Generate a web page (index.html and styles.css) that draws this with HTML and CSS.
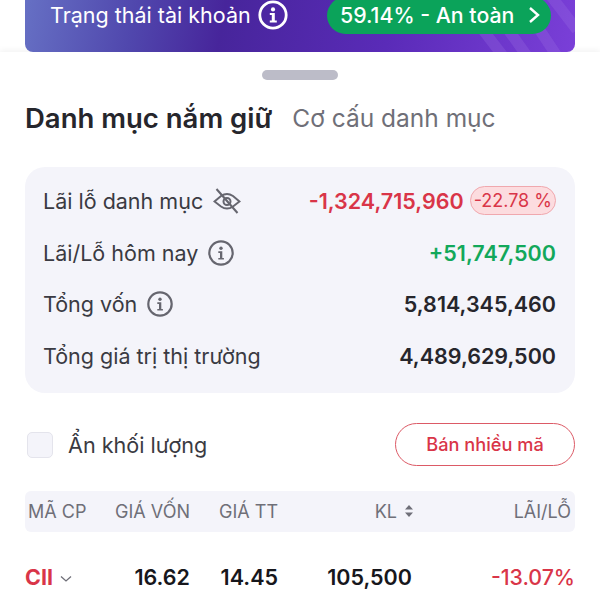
FILE: index.html
```html
<!DOCTYPE html>
<html lang="vi">
<head>
  <meta charset="UTF-8">
  <meta name="viewport" content="width=device-width, initial-scale=1.0">
  <title>Danh mục nắm giữ</title>
  <link rel="stylesheet" href="styles.css">
</head>
<body>
  <div class="screen">
    <div class="banner">
      <svg class="banner-stripes" width="110" height="52" viewBox="0 0 110 52" fill="none">
        <path d="M38 56 L18 30 M62 56 L32 14 M92 56 L52 -4 M112 30 L86 -4" stroke="#a27be8" stroke-opacity="0.24" stroke-width="11"/>
      </svg>
      <div class="banner-label">
        <span>Trạng thái tài khoản</span>
        <svg width="30" height="30" viewBox="0 0 30 30" fill="none">
          <circle cx="15" cy="15" r="13.200" stroke="#fff" stroke-width="2.800"/>
          <circle cx="15" cy="9.400" r="2.100" fill="#fff"/>
          <path d="M11.800 13h5v7.400h2v2h-7v-2h2v-5.400h-2z" fill="#fff"/>
        </svg>
      </div>
      <div class="status-pill">
        <span>59.14% - An toàn</span>
        <svg width="14" height="18" viewBox="0 0 14 18" fill="none">
          <path d="M3 2l8 7-8 7" stroke="#fff" stroke-width="2.400"/>
        </svg>
      </div>
    </div>

    <div class="sheet">
      <div class="grabber"></div>

      <div class="tabs">
        <span class="tab active">Danh mục nắm giữ</span>
        <span class="tab">Cơ cấu danh mục</span>
      </div>

      <div class="summary">
        <div class="summary-row">
          <div class="summary-label">
            <span>Lãi lỗ danh mục</span>
            <svg width="28" height="28" viewBox="0 0 28 28" fill="none">
              <path d="M1.500 14.500L8 9q3-2 6-2t6 2l6.500 5.500L20 19.500q-3 2-6 2t-6-2z" stroke="#66666f" stroke-width="2"/>
              <circle cx="14" cy="14.500" r="3.500" stroke="#66666f" stroke-width="2"/>
              <path d="M3.500 2l21 24" stroke="#66666f" stroke-width="2"/>
            </svg>
          </div>
          <div class="summary-value loss">
            <span>-1,324,715,960</span>
            <span class="percent-badge">-22.78 %</span>
          </div>
        </div>
        <div class="summary-row">
          <div class="summary-label">
            <span>Lãi/Lỗ hôm nay</span>
            <svg width="26" height="26" viewBox="0 0 26 26" fill="none">
              <circle cx="13" cy="13" r="11.700" stroke="#66666f" stroke-width="2.200"/>
              <circle cx="13" cy="8.200" r="1.700" fill="#66666f"/>
              <path d="M10.300 11.200h4v6.700h1.600v1.700h-5.600v-1.700h1.700v-5h-1.700z" fill="#66666f"/>
            </svg>
          </div>
          <div class="summary-value gain">+51,747,500</div>
        </div>
        <div class="summary-row">
          <div class="summary-label">
            <span>Tổng vốn</span>
            <svg width="26" height="26" viewBox="0 0 26 26" fill="none">
              <circle cx="13" cy="13" r="11.700" stroke="#66666f" stroke-width="2.200"/>
              <circle cx="13" cy="8.200" r="1.700" fill="#66666f"/>
              <path d="M10.300 11.200h4v6.700h1.600v1.700h-5.600v-1.700h1.700v-5h-1.700z" fill="#66666f"/>
            </svg>
          </div>
          <div class="summary-value">5,814,345,460</div>
        </div>
        <div class="summary-row">
          <div class="summary-label">
            <span>Tổng giá trị thị trường</span>
          </div>
          <div class="summary-value">4,489,629,500</div>
        </div>
      </div>

      <div class="actions">
        <label class="hide-volume">
          <span class="checkbox"></span>
          <span>Ẩn khối lượng</span>
        </label>
        <div class="sell-button">Bán nhiều mã</div>
      </div>

      <div class="table-head">
        <span class="col-code">MÃ CP</span>
        <span class="col-cost">GIÁ VỐN</span>
        <span class="col-price">GIÁ TT</span>
        <span class="col-volume">KL
          <svg width="10" height="14" viewBox="0 0 10 14"><path d="M5 1l4 4.600H1zM5 13L1 8.400h8z" fill="#6f6f78"/></svg>
        </span>
        <span class="col-change">LÃI/LỖ</span>
      </div>

      <div class="table-row">
        <span class="col-code stock-code">CII
          <svg width="12" height="8" viewBox="0 0 12 8" fill="none"><path d="M1 1.500l5 4.500 5-4.500" stroke="#6f6f78" stroke-width="1.300"/></svg>
        </span>
        <span class="col-cost">16.62</span>
        <span class="col-price">14.45</span>
        <span class="col-volume">105,500</span>
        <span class="col-change loss">-13.07%</span>
      </div>
    </div>
  </div>
</body>
</html>
```

FILE: styles.css
```css
:root {
  --text-color: #26262c;
  --muted-text: #6f6f78;
  --panel-bg: #f4f4fa;
  --loss: #d93548;
  --gain: #12a85a;
}

* {
  margin: 0;
  padding: 0;
  box-sizing: border-box;
}

html, body {
  height: 100%;
  overflow: hidden;
}

body {
  font-family: Inter, "Noto Sans", sans-serif;
  background-color: #ffffff;
  color: var(--text-color);
}

.screen {
  width: 600px;
  height: 600px;
  overflow: hidden;
}

.banner {
  position: relative;
  height: 52px;
  margin: 0 25px;
  padding: 0 24px 22px 25px;
  display: flex;
  justify-content: space-between;
  align-items: center;
  overflow: hidden;
  border-radius: 0 0 8px 8px;
  background: linear-gradient(100deg, #6670c4 0%, #5047ad 20%, #47259b 36%, #5a2bb8 66%, #7a3fd8 100%);
  color: #ffffff;
}

.banner-stripes {
  position: absolute;
  right: 0;
  top: 0;
}

.banner-label {
  position: relative;
  display: flex;
  align-items: center;
  gap: 7px;
  font-size: 21.500px;
}

.status-pill {
  position: relative;
  display: flex;
  align-items: center;
  justify-content: space-between;
  width: 224px;
  height: 37px;
  padding: 0 10px 0 13px;
  border-radius: 19px;
  background-color: #0ba35a;
  font-size: 21.300px;
  font-weight: 500;
}

.sheet {
  padding: 0 25px;
  background-color: #ffffff;
  box-shadow: 0 -2px 6px rgba(0, 0, 0, 0.05);
}

.grabber {
  width: 76px;
  height: 10px;
  margin: 0 auto;
  position: relative;
  top: 18px;
  border-radius: 5px;
  background-color: #bcbcc8;
}

.tabs {
  display: flex;
  align-items: center;
  gap: 20px;
  padding-top: 28px;
  height: 84px;
  font-size: 24.500px;
  color: var(--muted-text);
}

.tab.active {
  font-size: 27.500px;
  font-weight: 600;
  color: var(--text-color);
}

.summary {
  display: flex;
  flex-direction: column;
  height: 226px;
  margin-top: 21px;
  padding: 8px 19px 11px 18px;
  border-radius: 20px;
  background-color: var(--panel-bg);
}

.summary-row {
  flex: 1;
  display: flex;
  justify-content: space-between;
  align-items: center;
}

.summary-label {
  display: flex;
  align-items: center;
  gap: 10px;
  font-size: 21.500px;
  color: #3a3a42;
}

.summary-value {
  display: flex;
  align-items: center;
  gap: 6px;
  font-size: 21.500px;
  font-weight: 600;
}

.summary-value.loss {
  color: var(--loss);
}

.summary-value.gain {
  color: var(--gain);
}

.percent-badge {
  padding: 3px 3px;
  border: 1px solid #f0a8ae;
  border-radius: 15px;
  background-color: #fcdcdf;
  font-size: 18px;
  font-weight: 400;
}

.actions {
  display: flex;
  justify-content: space-between;
  align-items: center;
  margin-top: 30px;
}

.hide-volume {
  display: flex;
  align-items: center;
  gap: 15px;
  padding-left: 2px;
  font-size: 21.600px;
  color: #3a3a42;
}

.checkbox {
  width: 26px;
  height: 26px;
  border: 1px solid #e4e4ec;
  border-radius: 5px;
  background-color: var(--panel-bg);
}

.sell-button {
  width: 180px;
  height: 43px;
  border: 1.500px solid #dc5a66;
  border-radius: 22px;
  text-align: center;
  line-height: 40px;
  font-size: 18.200px;
  font-weight: 500;
  color: var(--loss);
}

.table-head,
.table-row {
  display: grid;
  grid-template-columns: 75px 87px 88px 136px 1fr;
  align-items: center;
}

.table-head {
  height: 41px;
  margin-top: 25px;
  padding: 0 4px 0 3px;
  border-radius: 6px;
  background-color: var(--panel-bg);
  font-size: 18px;
  color: var(--muted-text);
}

.table-row {
  height: 90px;
  padding: 0 0 0 3px;
  font-size: 21.500px;
  font-weight: 600;
  color: #17171c;
}

.col-cost,
.col-price,
.col-volume,
.col-change {
  text-align: right;
}

.col-volume svg {
  margin-left: 2px;
}

.table-row .col-volume {
  padding-right: 2px;
}

.stock-code {
  margin-left: -3px;
  color: var(--loss);
  font-weight: 700;
}

.stock-code svg {
  margin-left: 2px;
  vertical-align: 2px;
}

.table-row .loss {
  color: var(--loss);
  font-size: 21.300px;
  font-weight: 500;
}
```
